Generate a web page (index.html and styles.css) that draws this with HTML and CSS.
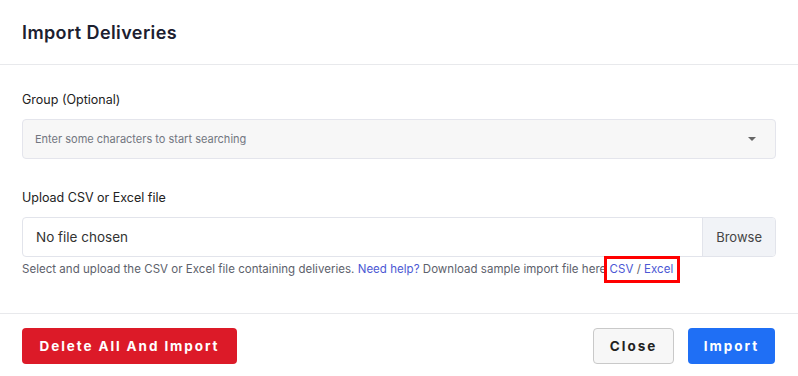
FILE: index.html
```html
<!DOCTYPE html>
<html lang="en">
<head>
    <meta charset="UTF-8">
    <meta name="viewport" content="width=device-width, initial-scale=1.0">
    <title>Import Deliveries</title>
    <link rel="stylesheet" href="styles.css">
</head>
<body>
    <div class="modal">
        <div class="modal-header">
            <h1>Import Deliveries</h1>
        </div>
        <div class="modal-body">
            <div class="field">
                <label>Group (Optional)</label>
                <div class="select">
                    <span class="placeholder">Enter some characters to start searching</span>
                    <span class="caret"></span>
                </div>
            </div>
            <div class="field">
                <label>Upload CSV or Excel file</label>
                <div class="file-input">
                    <span class="file-name">No file chosen</span>
                    <span class="browse">Browse</span>
                </div>
                <p class="help">Select and upload the CSV or Excel file containing deliveries. <a href="#">Need help?</a> Download sample import file here <span class="links"><a href="#">CSV</a> / <a href="#">Excel</a></span></p>
            </div>
        </div>
        <div class="modal-footer">
            <button class="btn btn-danger">Delete All And Import</button>
            <div class="right">
                <button class="btn btn-light">Close</button>
                <button class="btn btn-primary">Import</button>
            </div>
        </div>
    </div>
</body>
</html>
```

FILE: styles.css
```css
body {
    margin: 0;
    font-family: Inter, "Noto Sans", sans-serif;
    background: white;
    color: #222;
}
.modal {
    width: 798px;
    background: white;
}
.modal-header {
    height: 65px;
    border-bottom: 1px solid #e8e9ec;
    display: flex;
    align-items: center;
    padding: 0 22px;
    box-sizing: border-box;
}
h1 {
    margin: 0;
    font-size: 18px;
    font-weight: 600;
    color: #1c2030;
    letter-spacing: 0.4px;
}
.modal-body {
    padding: 25px 22px 35px;
}
.field + .field {
    margin-top: 29px;
}
label {
    display: block;
    font-size: 12.5px;
    line-height: 20px;
    color: #222;
    margin-bottom: 9px;
}
.select {
    height: 40px;
    box-sizing: border-box;
    border: 1px solid #e4e5ec;
    border-radius: 4px;
    background: #f7f7f7;
    display: flex;
    align-items: center;
    justify-content: space-between;
    padding: 0 19px 0 12px;
}
.placeholder {
    font-size: 11px;
    color: #727680;
}
.caret {
    width: 0;
    height: 0;
    border-left: 4px solid transparent;
    border-right: 4px solid transparent;
    border-top: 4px solid #666;
}
.file-input {
    height: 40px;
    box-sizing: border-box;
    border: 1px solid #e2e4eb;
    border-radius: 4px;
    display: flex;
    align-items: stretch;
    overflow: hidden;
}
.file-name {
    flex: 1;
    display: flex;
    align-items: center;
    padding-left: 13px;
    font-size: 13.5px;
    color: #333;
}
.browse {
    display: flex;
    align-items: center;
    padding: 0 13px;
    background: #f1f3f7;
    border-left: 1px solid #e2e4eb;
    font-size: 13px;
    color: #444;
}
.help {
    margin: 3px 0 0;
    font-size: 11.5px;
    line-height: 18px;
    color: #5d616b;
    letter-spacing: 0.03px;
}
.help a {
    color: #4c58d4;
    text-decoration: none;
}
.links {
    position: relative;
}
.links::after {
    content: "";
    position: absolute;
    top: -6px;
    bottom: -7px;
    left: -6px;
    right: -7px;
    border: 3px solid #f00;
}
.modal-footer {
    border-top: 1px solid #e8e9ec;
    padding: 14px 23px 14px 22px;
    display: flex;
    justify-content: space-between;
}
.right {
    display: flex;
    gap: 14px;
}
.btn {
    height: 36px;
    border-radius: 4px;
    font-family: Inter, sans-serif;
    font-size: 13.5px;
    font-weight: 700;
    letter-spacing: 2px;
    padding: 0;
    white-space: nowrap;
    cursor: pointer;
}
.btn-danger {
    background: #dc1a28;
    color: white;
    border: none;
    width: 215px;
    letter-spacing: 1.9px;
}
.btn-light {
    background: #f7f7f7;
    color: #222;
    border: 1px solid #c9c9c9;
    width: 81px;
}
.btn-primary {
    background: #1f6ff5;
    color: white;
    border: none;
    width: 87px;
}
```
